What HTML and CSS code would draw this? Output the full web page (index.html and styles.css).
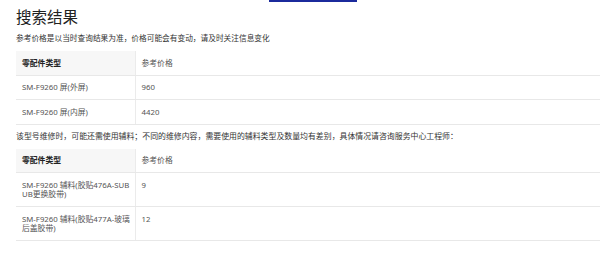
FILE: index.html
```html
<!DOCTYPE html>
<html lang="zh-CN">
<head>
<meta charset="utf-8">
<link rel="stylesheet" href="styles.css">
</head>
<body>
<div class="topbar"><span class="topbar-mark"></span></div>
<main class="result">
  <h1 class="result-title">搜索结果</h1>
  <p class="note">参考价格是以当时查询结果为准，价格可能会有变动，请及时关注信息变化</p>
  <table class="price-table">
    <colgroup><col class="col-a"><col></colgroup>
    <thead>
      <tr><th class="col-name">零配件类型</th><th class="col-price">参考价格</th></tr>
    </thead>
    <tbody>
      <tr><td class="col-name">SM-F9260 屏(外屏)</td><td class="col-price">960</td></tr>
      <tr><td class="col-name">SM-F9260 屏(内屏)</td><td class="col-price">4420</td></tr>
    </tbody>
  </table>
  <p class="note note-mid">该型号维修时，可能还需使用辅料；不同的维修内容，需要使用的辅料类型及数量均有差别，具体情况请咨询服务中心工程师：</p>
  <table class="price-table">
    <colgroup><col class="col-a"><col></colgroup>
    <thead>
      <tr><th class="col-name">零配件类型</th><th class="col-price">参考价格</th></tr>
    </thead>
    <tbody>
      <tr><td class="col-name">SM-F9260 辅料(胶贴476A-SUB<br>UB更换胶带)</td><td class="col-price">9</td></tr>
      <tr><td class="col-name">SM-F9260 辅料(胶贴477A-玻璃<br>后盖胶带)</td><td class="col-price">12</td></tr>
    </tbody>
  </table>
</main>
</body>
</html>
```
FILE: styles.css
```css
html, body {
  margin: 0;
  padding: 0;
  background: #ffffff;
}
body {
  font-family: "Noto Sans", "Noto Sans CJK SC", sans-serif;
  color: #333;
  width: 600px;
  overflow: hidden;
}
.topbar {
  height: 2px;
  padding-left: 269px;
}
.topbar-mark {
  display: block;
  width: 88px;
  height: 2px;
  background: #1b2a9c;
}
.result {
  padding: 4px 0 0 16px;
}
.result-title {
  margin: 0;
  font-size: 15.5px;
  font-weight: 400;
  line-height: 20px;
  color: #222;
  font-family: "Noto Sans CJK SC", sans-serif;
}
.note {
  margin: 6px 0 0 0;
  font-size: 7.7px;
  line-height: 11px;
  color: #333;
  font-family: "Noto Sans CJK SC", sans-serif;
}
.note-mid {
  margin: 5px 0 0 0;
  font-size: 7.9px;
}
.price-table {
  width: 584px;
  table-layout: fixed;
  border-collapse: collapse;
  margin-top: 8px;
  font-family: "Noto Sans", "Noto Sans CJK SC", sans-serif;
  font-size: 7.8px;
  line-height: 9.5px;
}
.col-a {
  width: 119px;
}
.price-table th,
.price-table td {
  text-align: left;
  padding: 7.5px 6px 6.5px 6px;
  border-bottom: 1px solid #e8e8e8;
  vertical-align: top;
  color: #555;
}
.price-table th {
  font-weight: 400;
}
.price-table th.col-name {
  background: #f7f7f7;
  font-weight: 700;
  color: #222;
}
.price-table .col-name {
  padding-right: 1px;
  border-right: 1px solid #ebebeb;
  white-space: nowrap;
}
```
